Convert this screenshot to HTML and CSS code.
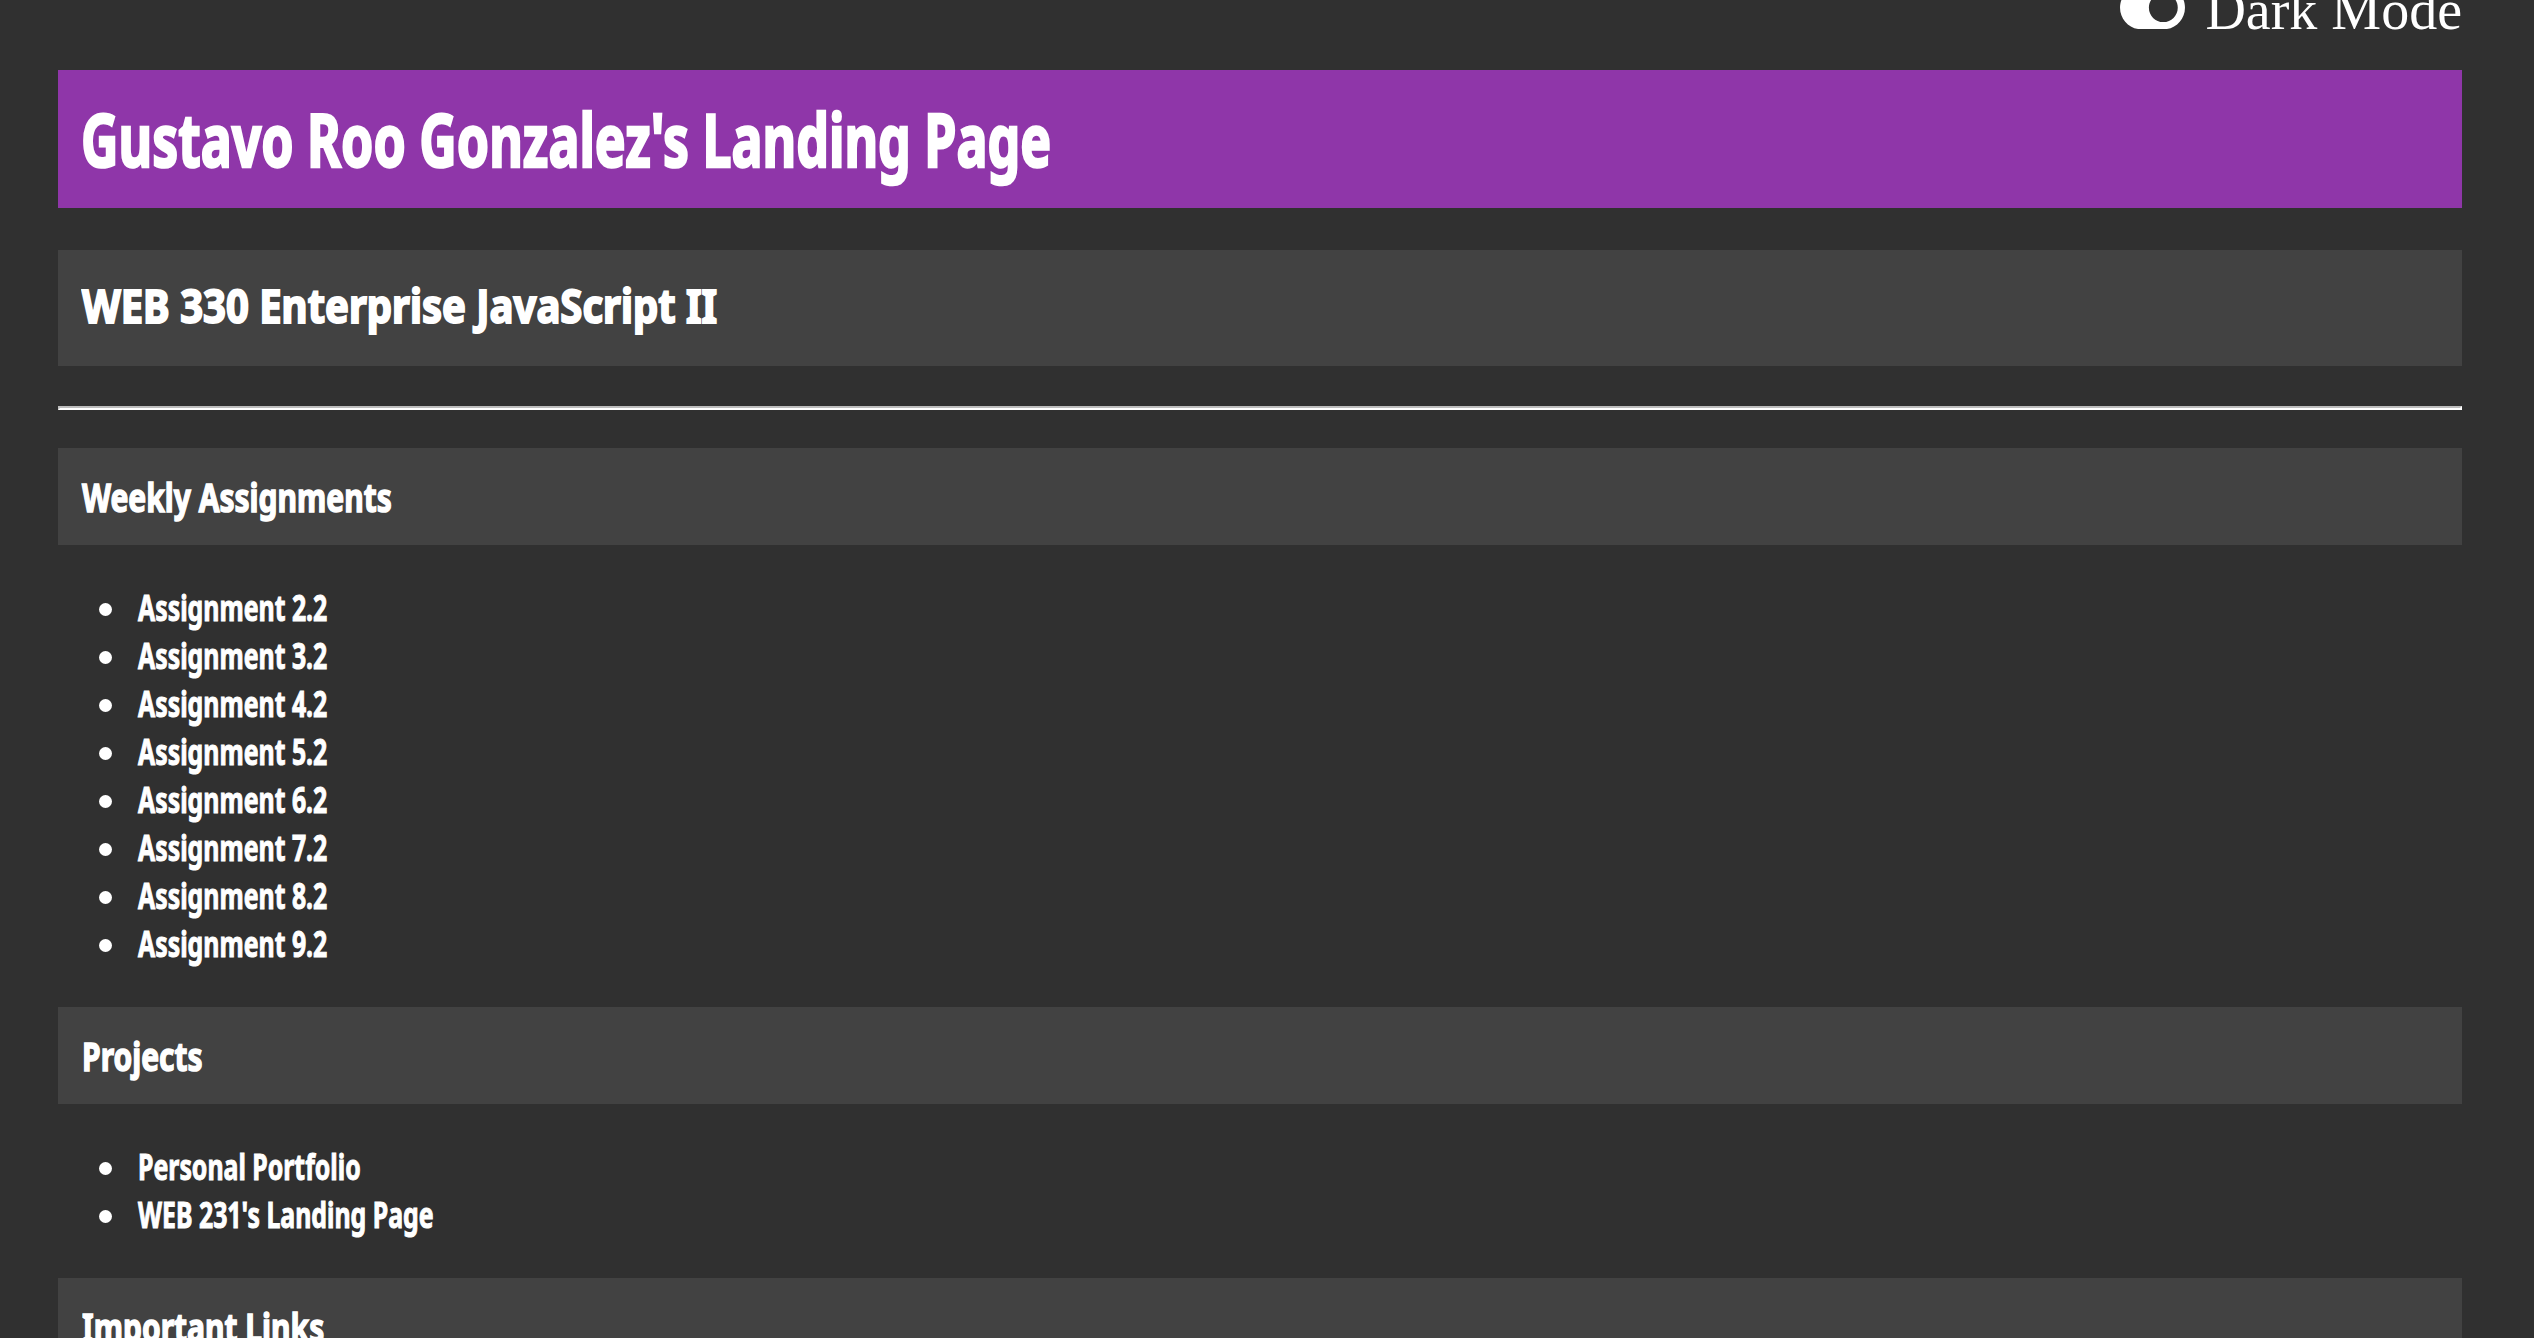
FILE: index.html
```html
<!DOCTYPE html>
<html lang="en">
<head>
<meta charset="utf-8">
<title>Gustavo Roo Gonzalez's Landing Page</title>
<link rel="stylesheet" href="styles.css">
</head>
<body>
<div class="page">
  <div class="topbar">
    <button class="mode-toggle" type="button">
      <svg class="toggle-icon" viewBox="0 64 576 384" aria-hidden="true"><path d="M384 64H192C86 64 0 150 0 256s86 192 192 192h192c106 0 192-86 192-192S490 64 384 64zm0 320c-70.8 0-128-57.3-128-128 0-70.8 57.3-128 128-128 70.8 0 128 57.3 128 128 0 70.8-57.3 128-128 128z"/></svg>Dark Mode
    </button>
  </div>

  <header class="banner">
    <h1 class="banner-title"><span class="narrow narrow-title">Gustavo Roo Gonzalez's Landing Page</span></h1>
  </header>

  <div class="course">
    <h2 class="course-title"><span class="narrow narrow-course">WEB 330 Enterprise JavaScript II</span></h2>
  </div>

  <hr class="divider">

  <section class="block">
    <h3 class="block-title"><span class="narrow narrow-block">Weekly Assignments</span></h3>
    <ul class="links">
      <li><a href="#">Assignment 2.2</a></li>
      <li><a href="#">Assignment 3.2</a></li>
      <li><a href="#">Assignment 4.2</a></li>
      <li><a href="#">Assignment 5.2</a></li>
      <li><a href="#">Assignment 6.2</a></li>
      <li><a href="#">Assignment 7.2</a></li>
      <li><a href="#">Assignment 8.2</a></li>
      <li><a href="#">Assignment 9.2</a></li>
    </ul>
  </section>

  <section class="block">
    <h3 class="block-title"><span class="narrow narrow-block">Projects</span></h3>
    <ul class="links">
      <li><a href="#">Personal Portfolio</a></li>
      <li><a href="#">WEB 231's Landing Page</a></li>
    </ul>
  </section>

  <section class="block">
    <h3 class="block-title"><span class="narrow narrow-block">Important Links</span></h3>
    <ul class="links">
      <li><a href="#">GitHub Repository</a></li>
      <li><a href="#">Course Syllabus</a></li>
    </ul>
  </section>
</div>
</body>
</html>
```

FILE: styles.css
```css
html, body {
  margin: 0;
  padding: 0;
  background: #303030;
  overflow: hidden;
}

body {
  color: #ffffff;
  font-family: "Noto Sans", "DejaVu Sans Condensed", sans-serif;
}

.page {
  width: 2404px;
  margin-left: 58px;
}

/* condensed display face imitation */
.narrow {
  display: inline-block;
  transform-origin: left center;
  white-space: nowrap;
}

.narrow-title {
  transform: scaleX(0.70);
  -webkit-text-stroke: 2.5px #ffffff;
}

.narrow-course {
  transform: scaleX(0.87);
  -webkit-text-stroke: 2px #ffffff;
}

.narrow-block {
  transform: scaleX(0.75);
  -webkit-text-stroke: 1.5px #ffffff;
}

.topbar {
  margin-top: -22px;
  display: flex;
  justify-content: flex-end;
}

.mode-toggle {
  background: none;
  border: none;
  padding: 0;
  margin: 0;
  color: #ffffff;
  font-family: "Liberation Serif", "Times New Roman", serif;
  font-size: 56px;
  line-height: 64px;
  cursor: pointer;
}

.toggle-icon {
  width: 65px;
  height: 43.3px;
  fill: #ffffff;
  margin-right: 20px;
}

.banner {
  margin-top: 28px;
  background: #8f36a9;
}

.banner-title {
  margin: 0;
  padding: 0 23px;
  font-size: 74px;
  font-weight: 700;
  line-height: 138px;
}

.course {
  margin-top: 42px;
  background: #424242;
}

.course-title {
  margin: 0;
  padding: 0 24px 5px;
  font-size: 46px;
  font-weight: 700;
  line-height: 111px;
}

.divider {
  margin: 40px 0 0;
  height: 0;
  border-style: solid;
  border-width: 2px;
  border-color: #bdbdbd #ffffff #ffffff #bdbdbd;
}

.block:first-of-type {
  margin-top: 38px;
}

.block-title {
  margin: 0;
  padding: 0 24px;
  background: #424242;
  font-size: 40px;
  font-weight: 700;
  line-height: 97px;
}

.links {
  margin: 39px 0;
  padding-left: 80px;
  list-style: none;
  font-size: 35px;
  font-weight: 700;
  line-height: 48px;
}

.links li {
  position: relative;
}

.links li::before {
  content: "";
  position: absolute;
  left: -39px;
  top: 19px;
  width: 13px;
  height: 13px;
  border-radius: 50%;
  background: #ffffff;
}

.links a {
  display: inline-block;
  color: #ffffff;
  text-decoration: none;
  white-space: nowrap;
  transform: scaleX(0.71);
  transform-origin: left center;
  -webkit-text-stroke: 1px #ffffff;
}
```
